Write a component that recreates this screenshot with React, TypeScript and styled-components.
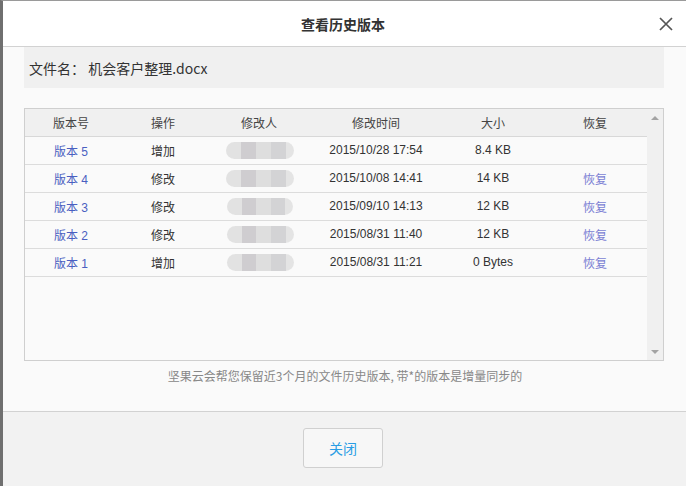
import React from "react";
import styled, { createGlobalStyle } from "styled-components";

const GlobalStyle = createGlobalStyle`
  html, body {
    margin: 0;
    padding: 0;
    width: 686px;
    height: 486px;
    overflow: hidden;
    background: #fafafa;
  }
  body {
    font-family: "Liberation Sans", "Noto Sans CJK SC", sans-serif;
    font-size: 12px;
    color: #333;
  }
`;

const versions = [
  { name: "版本 5", op: "增加", time: "2015/10/28 17:54", size: "8.4 KB", restore: false, blur: 68 },
  { name: "版本 4", op: "修改", time: "2015/10/08 14:41", size: "14 KB", restore: true, blur: 68 },
  { name: "版本 3", op: "修改", time: "2015/09/10 14:13", size: "12 KB", restore: true, blur: 66 },
  { name: "版本 2", op: "修改", time: "2015/08/31 11:40", size: "12 KB", restore: true, blur: 67 },
  { name: "版本 1", op: "增加", time: "2015/08/31 11:21", size: "0 Bytes", restore: true, blur: 67 },
];

const cols = "92px 92px 100px 134px 100px 104px";

const App = () => {
  return (
    <>
      <GlobalStyle />
      <Dialog>
        <Header>
          <Title>查看历史版本</Title>
          <CloseX aria-label="close">
            <svg width="14" height="14" viewBox="0 0 14 14">
              <path d="M1 1 L13 13 M13 1 L1 13" stroke="#555" strokeWidth="1.7" fill="none" />
            </svg>
          </CloseX>
        </Header>
        <Body>
          <FileBar>文件名： 机会客户整理.docx</FileBar>
          <TableBox>
            <TableMain>
              <HeadRow>
                <Cell>版本号</Cell>
                <Cell>操作</Cell>
                <Cell>修改人</Cell>
                <Cell>修改时间</Cell>
                <Cell>大小</Cell>
                <Cell>恢复</Cell>
              </HeadRow>
              {versions.map((v) => (
                <Row key={v.name}>
                  <Cell $link>{v.name}</Cell>
                  <Cell>{v.op}</Cell>
                  <Cell>
                    <Blurred style={{ width: v.blur }} />
                  </Cell>
                  <Cell>{v.time}</Cell>
                  <Cell>{v.size}</Cell>
                  <Cell $restore>{v.restore ? "恢复" : ""}</Cell>
                </Row>
              ))}
            </TableMain>
            <ScrollBar>
              <Arrow $up />
              <Arrow />
            </ScrollBar>
          </TableBox>
          <Note>坚果云会帮您保留近3个月的文件历史版本, 带*的版本是增量同步的</Note>
        </Body>
        <Footer>
          <CloseBtn>关闭</CloseBtn>
        </Footer>
      </Dialog>
    </>
  );
};

const Dialog = styled.div`
  width: 686px;
  height: 486px;
  box-sizing: border-box;
  border-left: 3px solid #6f6f6f;
  border-top: 1px solid #9a9a9a;
  display: flex;
  flex-direction: column;
  background: #fafafa;
`;

const Header = styled.div`
  height: 45px;
  flex-shrink: 0;
  background: #fff;
  border-bottom: 1px solid #d2d2d2;
  display: flex;
  align-items: center;
  justify-content: center;
  position: relative;
`;

const Title = styled.div`
  font-family: "Noto Sans CJK SC", sans-serif;
  font-size: 14px;
  font-weight: 700;
  color: #333;
  margin-left: -3px;
`;

const CloseX = styled.div`
  position: absolute;
  right: 13px;
  top: 16px;
  width: 14px;
  height: 14px;
  display: flex;
`;

const Body = styled.div`
  flex: 1;
  padding: 0 22px 0 21px;
  display: flex;
  flex-direction: column;
`;

const FileBar = styled.div`
  height: 41px;
  background: #f0f0f0;
  display: flex;
  align-items: center;
  padding-left: 5px;
  font-family: "Noto Sans CJK SC", sans-serif;
  font-size: 14px;
  color: #333;
  margin-bottom: 20px;
`;

const TableBox = styled.div`
  height: 253px;
  box-sizing: border-box;
  border: 1px solid #cfcfcf;
  display: flex;
  background: #fafafa;
`;

const TableMain = styled.div`
  flex: 1;
  display: flex;
  flex-direction: column;
`;

const HeadRow = styled.div`
  display: grid;
  grid-template-columns: ${cols};
  height: 27px;
  background: #f0f0f0;
  border-bottom: 1px solid #d8d8d8;
  color: #444;
`;

const Row = styled.div`
  display: grid;
  grid-template-columns: ${cols};
  height: 27px;
  border-bottom: 1px solid #dcdcdc;
  color: #333;
`;

const Cell = styled.div<{ $link?: boolean; $restore?: boolean }>`
  display: flex;
  align-items: center;
  justify-content: center;
  padding-bottom: 1px;
  font-family: "Liberation Sans", "Noto Sans CJK SC", sans-serif;
  font-size: 12px;
  color: ${(p) => (p.$link ? "#4a5fc1" : p.$restore ? "#7b7fd4" : "inherit")};
`;

const Blurred = styled.div`
  height: 17px;
  margin-left: 2px;
  border-radius: 9px;
  background: linear-gradient(
    to right,
    #e2e2e2 0%,
    #e2e2e2 22%,
    #cfcdd0 22%,
    #cfcdd0 44%,
    #dedede 44%,
    #dedede 66%,
    #d3d3d5 66%,
    #d3d3d5 88%,
    #e4e4e4 88%
  );
  filter: blur(0.6px);
`;

const ScrollBar = styled.div`
  width: 17px;
  background: #f0f0f0;
  display: flex;
  flex-direction: column;
  justify-content: space-between;
  align-items: center;
  padding: 7px 0 6px;
`;

const Arrow = styled.div<{ $up?: boolean }>`
  width: 0;
  height: 0;
  border-left: 4px solid transparent;
  border-right: 4px solid transparent;
  ${(p) => (p.$up ? "border-bottom: 4px solid #a3a3a3;" : "border-top: 4px solid #a3a3a3;")}
`;

const Note = styled.div`
  text-align: center;
  font-family: "Noto Sans CJK SC", sans-serif;
  font-size: 12px;
  color: #888;
  margin-top: 6px;
  margin-left: 2px;
`;

const Footer = styled.div`
  height: 75px;
  flex-shrink: 0;
  background: #f2f2f2;
  border-top: 1px solid #d2d2d2;
  display: flex;
  justify-content: center;
  padding-top: 16px;
  box-sizing: border-box;
`;

const CloseBtn = styled.div`
  width: 80px;
  height: 40px;
  box-sizing: border-box;
  margin-left: -3px;
  border: 1px solid #d0d0d0;
  border-radius: 3px;
  background: #f7f7f7;
  display: flex;
  align-items: center;
  justify-content: center;
  font-family: "Noto Sans CJK SC", sans-serif;
  font-size: 14px;
  color: #2a9de4;
  cursor: pointer;
`;

export default App;
